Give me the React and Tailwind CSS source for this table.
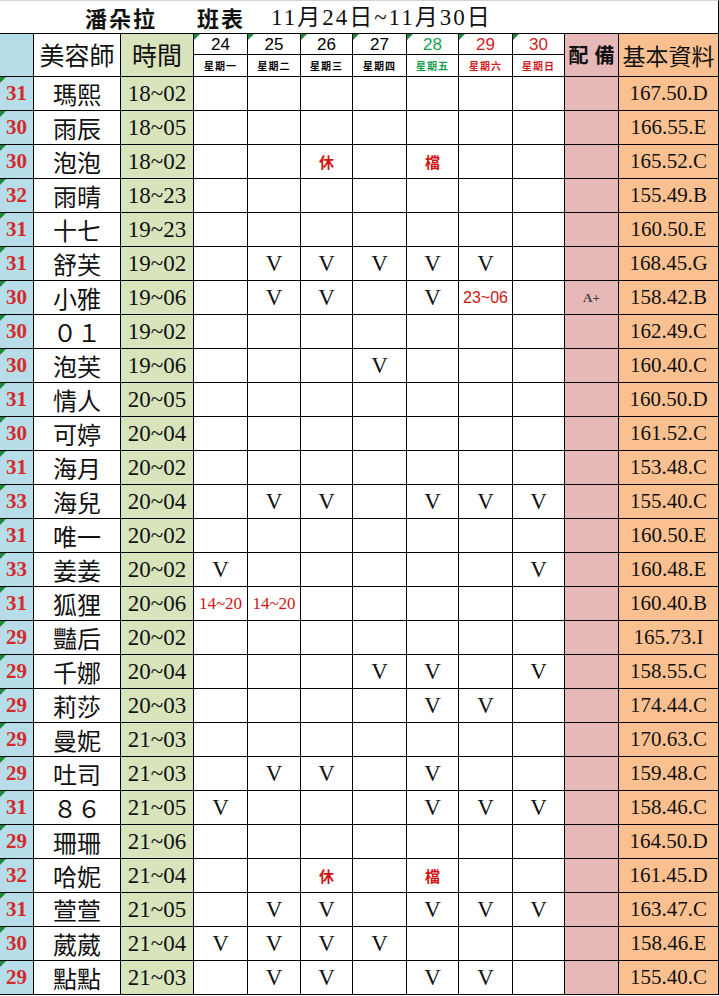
import React from "react";

const serif = "font-['Liberation_Serif','Noto_Sans_CJK_TC',serif]";
const cjk = "font-['Noto_Sans_CJK_TC','Liberation_Serif',serif]";
const sans = "font-['Liberation_Sans','Noto_Sans_CJK_TC',sans-serif]";

const days = [
  { d: "24", w: "星期一", c: "text-black" },
  { d: "25", w: "星期二", c: "text-black" },
  { d: "26", w: "星期三", c: "text-black" },
  { d: "27", w: "星期四", c: "text-black" },
  { d: "28", w: "星期五", c: "text-[#12a04c]" },
  { d: "29", w: "星期六", c: "text-[#d41c1c]" },
  { d: "30", w: "星期日", c: "text-[#d41c1c]" },
];

// [no, name, time, marks(24..30), peibei, info]
const rows = [
  ["31", "瑪熙", "18~02", ["", "", "", "", "", "", ""], "", "167.50.D"],
  ["30", "雨辰", "18~05", ["", "", "", "", "", "", ""], "", "166.55.E"],
  ["30", "泡泡", "18~02", ["", "", "休", "", "檔", "", ""], "", "165.52.C"],
  ["32", "雨晴", "18~23", ["", "", "", "", "", "", ""], "", "155.49.B"],
  ["31", "十七", "19~23", ["", "", "", "", "", "", ""], "", "160.50.E"],
  ["31", "舒芙", "19~02", ["", "V", "V", "V", "V", "V", ""], "", "168.45.G"],
  ["30", "小雅", "19~06", ["", "V", "V", "", "V", "23~06", ""], "A+", "158.42.B"],
  ["30", "０１", "19~02", ["", "", "", "", "", "", ""], "", "162.49.C"],
  ["30", "泡芙", "19~06", ["", "", "", "V", "", "", ""], "", "160.40.C"],
  ["31", "情人", "20~05", ["", "", "", "", "", "", ""], "", "160.50.D"],
  ["30", "可婷", "20~04", ["", "", "", "", "", "", ""], "", "161.52.C"],
  ["31", "海月", "20~02", ["", "", "", "", "", "", ""], "", "153.48.C"],
  ["33", "海兒", "20~04", ["", "V", "V", "", "V", "V", "V"], "", "155.40.C"],
  ["31", "唯一", "20~02", ["", "", "", "", "", "", ""], "", "160.50.E"],
  ["33", "姜姜", "20~02", ["V", "", "", "", "", "", "V"], "", "160.48.E"],
  ["31", "狐狸", "20~06", ["14~20", "14~20", "", "", "", "", ""], "", "160.40.B"],
  ["29", "豔后", "20~02", ["", "", "", "", "", "", ""], "", "165.73.I"],
  ["29", "千娜", "20~04", ["", "", "", "V", "V", "", "V"], "", "158.55.C"],
  ["29", "莉莎", "20~03", ["", "", "", "", "V", "V", ""], "", "174.44.C"],
  ["29", "曼妮", "21~03", ["", "", "", "", "", "", ""], "", "170.63.C"],
  ["29", "吐司", "21~03", ["", "V", "V", "", "V", "", ""], "", "159.48.C"],
  ["31", "８６", "21~05", ["V", "", "", "", "V", "V", "V"], "", "158.46.C"],
  ["29", "珊珊", "21~06", ["", "", "", "", "", "", ""], "", "164.50.D"],
  ["32", "哈妮", "21~04", ["", "", "休", "", "檔", "", ""], "", "161.45.D"],
  ["31", "萱萱", "21~05", ["", "V", "V", "", "V", "V", "V"], "", "163.47.C"],
  ["30", "葳葳", "21~04", ["V", "V", "V", "V", "", "", ""], "", "158.46.E"],
  ["29", "點點", "21~03", ["", "V", "V", "", "V", "V", ""], "", "155.40.C"],
];

const Corner = () => (
  <div className="absolute top-0 left-0 w-0 h-0 border-t-[6px] border-r-[6px] border-t-[#1c8a3c] border-r-transparent" />
);

const Cell = ({ className = "", children }) => (
  <div
    className={`relative flex items-center justify-center border-r border-b border-black overflow-hidden whitespace-nowrap ${className}`}
  >
    {children}
  </div>
);

const Mark = ({ v }) => {
  if (!v) return null;
  if (v === "V")
    return <span className={`text-[23px] leading-none text-[#111] ${serif}`}>V</span>;
  if (v === "休" || v === "檔")
    return (
      <span className={`text-[15px] font-bold leading-none text-[#d01414] ${cjk}`}>{v}</span>
    );
  if (v === "23~06")
    return <span className={`text-[16px] leading-none text-[#d01414] ${sans}`}>{v}</span>;
  return <span className={`text-[17px] leading-none text-[#d01414] ${serif}`}>{v}</span>;
};

export default function App() {
  return (
    <div className="w-[719px] h-[996px] bg-white overflow-hidden">
      {/* title */}
      <div className="h-[34px] flex items-center pl-[85px] border-t border-[#d4d4d4] border-b border-b-black border-r border-r-black text-[#111]">
        <span className={`text-[22px] font-bold tracking-[2px] leading-none ${cjk}`}>潘朵拉</span>
        <span className={`ml-[40px] text-[22px] font-bold tracking-[2px] leading-none ${cjk}`}>
          班表
        </span>
        <span className={`ml-[26px] text-[23px] tracking-[2px] leading-none ${serif}`}>
          11月24日~11月30日
        </span>
      </div>

      <div className="grid grid-cols-[34px_87px_73px_54px_53px_52px_54px_52px_54px_52px_54px_100px] grid-rows-[21px_22px_repeat(27,34px)]">
        {/* header */}
        <Cell className="row-span-2 bg-[#b7dde8]" />
        <Cell className={`row-span-2 text-[25px] text-[#111] ${cjk}`}>美容師</Cell>
        <Cell className={`row-span-2 bg-[#d8e4bc] text-[25px] text-[#111] ${cjk}`}>時間</Cell>
        {days.map((d) => (
          <Cell key={d.d} className={`text-[17px] leading-none ${sans} ${d.c}`}>
            <Corner />
            {d.d}
          </Cell>
        ))}
        <Cell className={`row-span-2 bg-[#e6b8b7] text-[20px] font-bold text-[#111] gap-[6px] ${cjk}`}>
          <span>配</span>
          <span>備</span>
        </Cell>
        <Cell className={`row-span-2 bg-[#fac090] text-[23px] text-[#111] ${cjk}`}>基本資料</Cell>
        {days.map((d) => (
          <Cell key={d.w} className={`text-[10px] font-bold tracking-[1px] leading-none ${cjk} ${d.c}`}>
            {d.w}
          </Cell>
        ))}

        {/* body */}
        {rows.map(([no, name, time, marks, pb, info], i) => (
          <React.Fragment key={i}>
            <Cell className={`bg-[#b7dde8] text-[21px] font-bold text-[#d42a2a] leading-none ${serif}`}>
              <Corner />
              {no}
            </Cell>
            <Cell className={`text-[24px] text-[#111] leading-none ${cjk}`}>{name}</Cell>
            <Cell className={`bg-[#d8e4bc] text-[23px] text-[#111] leading-none ${serif}`}>{time}</Cell>
            {marks.map((m, j) => (
              <Cell key={j}>
                <Mark v={m} />
              </Cell>
            ))}
            <Cell className={`bg-[#e6b8b7] text-[13px] font-bold text-[#444] leading-none ${serif}`}>
              {pb}
            </Cell>
            <Cell className={`bg-[#fac090] text-[21px] text-[#111] leading-none ${serif}`}>{info}</Cell>
          </React.Fragment>
        ))}
      </div>
    </div>
  );
}
